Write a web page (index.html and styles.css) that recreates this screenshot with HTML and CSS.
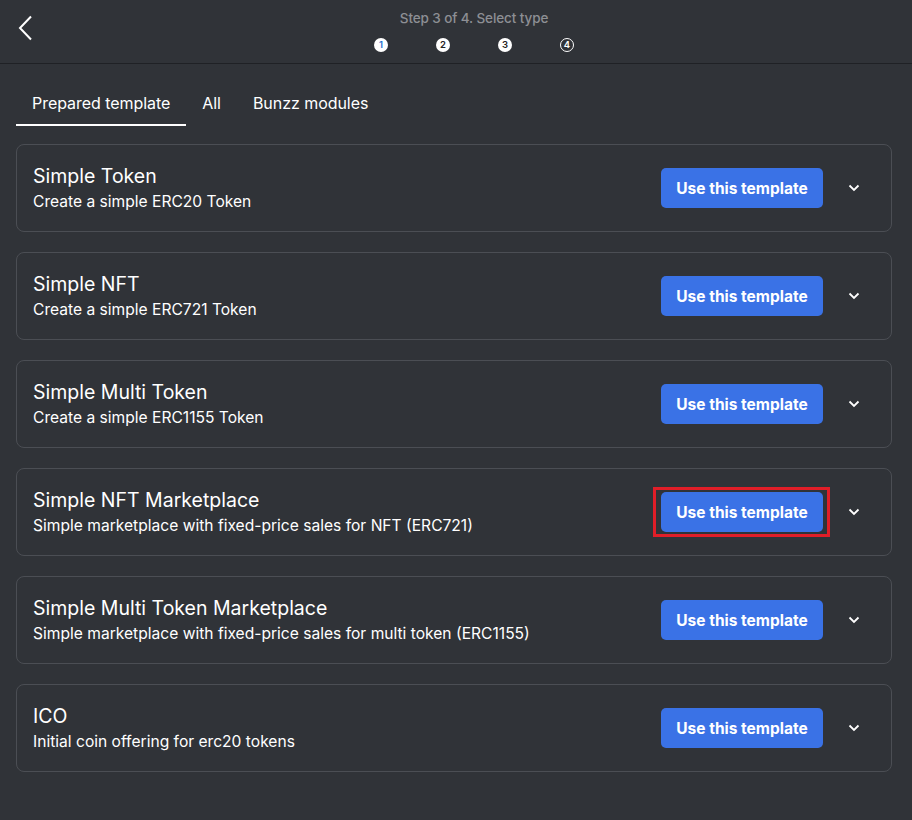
FILE: index.html
```html
<!DOCTYPE html>
<html lang="en">
<head>
<meta charset="utf-8">
<title>Select type</title>
<link rel="stylesheet" href="styles.css">
</head>
<body>
<header class="topbar">
  <div class="back">
    <svg width="16" height="26" viewBox="0 0 16 26"><path d="M13 1.5 L2 13 L13 24.5" fill="none" stroke="#fff" stroke-width="2"/></svg>
  </div>
  <div class="stepper">
    <div class="step-title">Step 3 of 4. Select type</div>
    <div class="steps">
      <span class="dot done one">1</span>
      <span class="dot done">2</span>
      <span class="dot done">3</span>
      <span class="dot todo">4</span>
    </div>
  </div>
</header>

<nav class="tabs">
  <div class="tab active">Prepared template</div>
  <div class="tab">All</div>
  <div class="tab">Bunzz modules</div>
</nav>

<main class="list">
  <div class="card">
    <div class="info"><div class="title">Simple Token</div><div class="desc">Create a simple ERC20 Token</div></div>
    <button class="use">Use this template</button>
    <span class="chev"><svg width="12" height="8" viewBox="0 0 12 8"><path d="M1.5 1.5 L6 6 L10.5 1.5" fill="none" stroke="#fff" stroke-width="1.8"/></svg></span>
  </div>
  <div class="card">
    <div class="info"><div class="title">Simple NFT</div><div class="desc">Create a simple ERC721 Token</div></div>
    <button class="use">Use this template</button>
    <span class="chev"><svg width="12" height="8" viewBox="0 0 12 8"><path d="M1.5 1.5 L6 6 L10.5 1.5" fill="none" stroke="#fff" stroke-width="1.8"/></svg></span>
  </div>
  <div class="card">
    <div class="info"><div class="title">Simple Multi Token</div><div class="desc">Create a simple ERC1155 Token</div></div>
    <button class="use">Use this template</button>
    <span class="chev"><svg width="12" height="8" viewBox="0 0 12 8"><path d="M1.5 1.5 L6 6 L10.5 1.5" fill="none" stroke="#fff" stroke-width="1.8"/></svg></span>
  </div>
  <div class="card">
    <div class="info"><div class="title">Simple NFT Marketplace</div><div class="desc">Simple marketplace with fixed-price sales for NFT (ERC721)</div></div>
    <button class="use highlight">Use this template</button>
    <span class="chev"><svg width="12" height="8" viewBox="0 0 12 8"><path d="M1.5 1.5 L6 6 L10.5 1.5" fill="none" stroke="#fff" stroke-width="1.8"/></svg></span>
  </div>
  <div class="card">
    <div class="info"><div class="title">Simple Multi Token Marketplace</div><div class="desc">Simple marketplace with fixed-price sales for multi token (ERC1155)</div></div>
    <button class="use">Use this template</button>
    <span class="chev"><svg width="12" height="8" viewBox="0 0 12 8"><path d="M1.5 1.5 L6 6 L10.5 1.5" fill="none" stroke="#fff" stroke-width="1.8"/></svg></span>
  </div>
  <div class="card">
    <div class="info"><div class="title">ICO</div><div class="desc">Initial coin offering for erc20 tokens</div></div>
    <button class="use">Use this template</button>
    <span class="chev"><svg width="12" height="8" viewBox="0 0 12 8"><path d="M1.5 1.5 L6 6 L10.5 1.5" fill="none" stroke="#fff" stroke-width="1.8"/></svg></span>
  </div>
</main>
</body>
</html>
```
FILE: styles.css
```css
* { box-sizing: border-box; }
html, body { margin: 0; padding: 0; }
body {
  background: #303338;
  color: #fff;
  font-family: Inter, "Noto Sans", "Liberation Sans", sans-serif;
  height: 820px;
  overflow: hidden;
}
.topbar {
  display: flex;
  height: 64px;
  border-bottom: 1px solid #1f2125;
}
.back {
  width: 36px;
  padding: 15px 0 0 18px;
  flex: none;
}
.back svg { display: block; }
.stepper {
  flex: 1;
  display: flex;
  flex-direction: column;
  align-items: center;
  padding-top: 9px;
}
.step-title {
  font-size: 13.5px;
  font-weight: 500;
  color: #8d8f94;
  line-height: 18px;
  letter-spacing: -0.1px;
}
.steps {
  display: flex;
  gap: 48px;
  margin-top: 11px;
}
.dot {
  width: 14px;
  height: 14px;
  border-radius: 50%;
  display: flex;
  align-items: center;
  justify-content: center;
  font-size: 9.5px;
  font-weight: 600;
  line-height: 1;
}
.dot.done { background: #fff; color: #222; }
.dot.one { color: #1e6fd0; }
.dot.todo { border: 1.3px solid #fff; color: #fff; }
.tabs {
  display: flex;
  margin: 17px 16px 0;
}
.tab {
  padding: 12px 16px 11px;
  font-size: 16px;
  line-height: 20px;
  font-weight: 400;
  color: #fff;
  border-bottom: 2px solid transparent;
  letter-spacing: -0.05px;
}
.tab.active { border-bottom-color: #fff; }
.list {
  display: flex;
  flex-direction: column;
  gap: 20px;
  margin: 18px 20px 0 16px;
}
.card {
  height: 88px;
  border: 1px solid #4b4e54;
  border-radius: 8px;
  display: flex;
  align-items: center;
  padding: 0 17px 0 16px;
}
.info { flex: 1; }
.title {
  font-size: 19.5px;
  line-height: 24px;
  color: #fff;
  margin-top: -1px;
}
.desc {
  font-size: 15.6px;
  line-height: 20px;
  margin-top: 4px;
  color: #fff;
}
.use {
  position: relative;
  width: 162px;
  height: 40px;
  background: #3a72e6;
  color: #fff;
  border: none;
  border-radius: 5px;
  font-family: inherit;
  font-size: 15.5px;
  font-weight: 700;
  letter-spacing: 0;
  padding: 0;
}
.use.highlight::after {
  content: "";
  position: absolute;
  left: -8px;
  right: -7px;
  top: -5px;
  bottom: -5px;
  border: 3px solid #e01e28;
}
.chev {
  width: 40px;
  margin-left: 11px;
  display: flex;
  justify-content: center;
}
.chev svg { display: block; }
```
